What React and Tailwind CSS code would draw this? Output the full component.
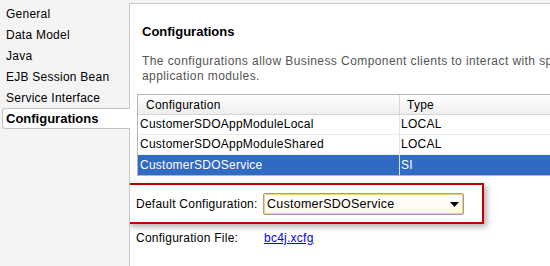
import React from 'react';

const navItems = ['General', 'Data Model', 'Java', 'EJB Session Bean', 'Service Interface'];

const rows = [
  { name: 'CustomerSDOAppModuleLocal', type: 'LOCAL' },
  { name: 'CustomerSDOAppModuleShared', type: 'LOCAL' },
  { name: 'CustomerSDOService', type: 'SI', selected: true },
];

const App = () => {
  return (
    <div className="flex w-[550px] h-[266px] overflow-hidden bg-[#f4f4f4] font-['Liberation_Sans',Arial,sans-serif] text-[12px] text-black tracking-[0.25px]">
      {/* side nav */}
      <div className="w-[129px] shrink-0 pt-[4px]">
        {navItems.map((item) => (
          <div key={item} className="h-[21px] leading-[21px] pl-[6px]">
            {item}
          </div>
        ))}
        <div className="relative z-10 -mt-px ml-[2px] mr-[-1px] h-[21px] leading-[19px] pl-[3px] bg-white border border-r-0 border-[#c4c4c4] rounded-l-[3px] font-bold text-[13px] tracking-normal">
          Configurations
        </div>
      </div>

      {/* content */}
      <div className="flex-1 min-w-0 mt-[3px] bg-white border-l border-t border-[#c8c8c8] pl-[6px] pt-[20px] overflow-hidden">
        <h3 className="ml-[6px] h-[16px] leading-[16px] font-bold text-[13px] tracking-normal">Configurations</h3>
        <p className="ml-[6px] mt-[14px] leading-[15px] text-[#555] whitespace-nowrap tracking-[0.42px]">
          The configurations allow Business Component clients to interact with specific
          <br />
          application modules.
        </p>

        <div className="mt-[10px] ml-[1px] w-[440px] border border-[#b4b4b4]">
          <div className="flex h-[20px] border-b border-[#d4d4d4] bg-gradient-to-b from-white to-[#eeeeee]">
            <div className="w-[262px] shrink-0 pl-[8px] leading-[20px] border-r border-[#d8d8d8]">Configuration</div>
            <div className="pl-[7px] leading-[20px]">Type</div>
          </div>
          {rows.map((r) => (
            <div
              key={r.name}
              className={
                r.selected
                  ? 'flex h-[20px] bg-[#316ac5] text-white'
                  : 'flex h-[20px] border-b border-[#ececec]'
              }
            >
              <div
                className={
                  r.selected
                    ? 'w-[262px] shrink-0 pl-[2px] leading-[20px] border-r border-[#dbe3f2]'
                    : 'w-[262px] shrink-0 pl-[2px] leading-[19px] border-r border-[#e4e4e4]'
                }
              >
                {r.name}
              </div>
              <div className={r.selected ? 'pl-[1px] leading-[20px]' : 'pl-[1px] leading-[19px]'}>{r.type}</div>
            </div>
          ))}
        </div>

        <div className="relative mt-[17px] flex h-[22px] items-center">
          <div className="absolute -left-[9px] -top-[10px] w-[357px] h-[41px] border-2 border-[#bd0000] shadow-[3px_3px_6px_rgba(0,0,0,0.3)] pointer-events-none" />
          <div className="w-[127px] shrink-0 leading-[22px]">Default Configuration:</div>
          <div className="w-[201px] h-[22px] border border-[#9c9c9c] rounded-[2px]">
            <div className="flex h-full items-center justify-between border border-[#f8cf80] bg-gradient-to-b from-white to-[#fff8ec] pl-[2px] pr-[3px]">
              <span className="leading-[18px] text-[12.5px]">CustomerSDOService</span>
              <svg width="9" height="5" viewBox="0 0 9 5">
                <path d="M0 0 H9 L4.5 5 Z" fill="#000" />
              </svg>
            </div>
          </div>
        </div>

        <div className="mt-[13px] flex h-[20px] items-center">
          <div className="w-[128px] shrink-0">Configuration File:</div>
          <a href="#" className="text-[#0000ff] underline">bc4j.xcfg</a>
        </div>
      </div>
    </div>
  );
};

export default App;
